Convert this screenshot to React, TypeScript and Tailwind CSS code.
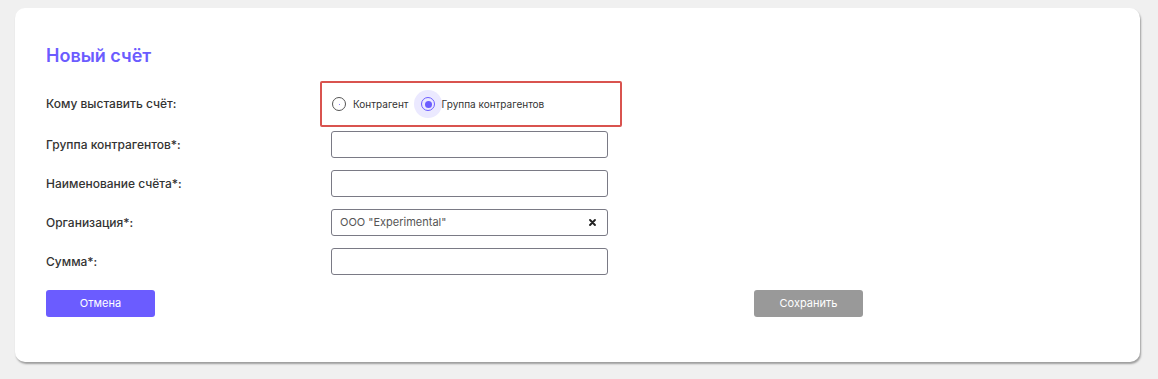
import React from "react";

const font = { fontFamily: "Inter, 'Noto Sans', sans-serif" };

function Row({ label, children }: { label: string; children?: React.ReactNode }) {
  return (
    <div className="flex items-center h-[27px]">
      <div className="w-[285px] text-[12px] font-medium text-[#333]">{label}</div>
      {children}
    </div>
  );
}

function Input({ value, clear }: { value?: string; clear?: boolean }) {
  return (
    <div className="w-[277px] h-[27px] border border-[#7a7a85] rounded-[3px] flex items-center px-[8px] justify-between">
      <span className="text-[11px] text-[#555]">{value}</span>
      {clear && (
        <svg width="7" height="7" viewBox="0 0 8 8" className="mr-[3px]">
          <path d="M1.2 1.2 L6.8 6.8 M6.8 1.2 L1.2 6.8" stroke="#222" strokeWidth="2.2" strokeLinecap="round" />
        </svg>
      )}
    </div>
  );
}

export default function App() {
  return (
    <div className="w-[1158px] h-[379px] bg-[#f0f0f0] pt-[8px] pl-[15px]" style={font}>
      <div className="w-[1125px] h-[354px] bg-white rounded-[10px] shadow-[1px_2px_2px_rgba(0,0,0,0.35)] pt-[36px] pl-[31px]">
        <div className="text-[18px] leading-[24px] font-semibold text-[#6b5cff]">Новый счёт</div>
        <div className="flex items-center mt-[13px] h-[46px]">
          <div className="w-[274px] text-[12px] font-medium text-[#333]">Кому выставить счёт:</div>
          <div className="w-[302px] h-[46px] border-2 border-[#d9534f] rounded-[2px] flex items-center pl-[10px]">
            <div className="flex items-center">
              <div className="w-[14px] h-[14px] rounded-full border border-[#555] flex items-center justify-center mr-[7px]">
                <div className="w-[1px] h-[1px] bg-[#6b5cff] rounded-full" />
              </div>
              <span className="text-[10px] text-[#333]">Контрагент</span>
            </div>
            <div className="flex items-center ml-[13px]">
              <div className="relative w-[14px] h-[14px] mr-[6px]">
                <div className="absolute -inset-[7px] rounded-full bg-[#ebe9ff]" />
                <div className="relative w-[14px] h-[14px] rounded-full border-[1.5px] border-[#6b5cff] flex items-center justify-center">
                  <div className="w-[7px] h-[7px] rounded-full bg-[#6b5cff]" />
                </div>
              </div>
              <span className="relative text-[10px] text-[#333]">Группа контрагентов</span>
            </div>
          </div>
        </div>
        <div className="mt-[4px] flex flex-col gap-[12px]">
          <Row label="Группа контрагентов*:">
            <Input />
          </Row>
          <Row label="Наименование счёта*:">
            <Input />
          </Row>
          <Row label="Организация*:">
            <Input value={'ООО "Experimental"'} clear />
          </Row>
          <Row label="Сумма*:">
            <Input />
          </Row>
        </div>
        <div className="flex mt-[15px]">
          <button className="w-[109px] h-[27px] rounded-[3px] bg-[#6b5cff] text-white text-[11px]">Отмена</button>
          <button className="w-[109px] h-[27px] rounded-[3px] bg-[#999999] text-white text-[11px] ml-[599px]">Сохранить</button>
        </div>
      </div>
    </div>
  );
}
